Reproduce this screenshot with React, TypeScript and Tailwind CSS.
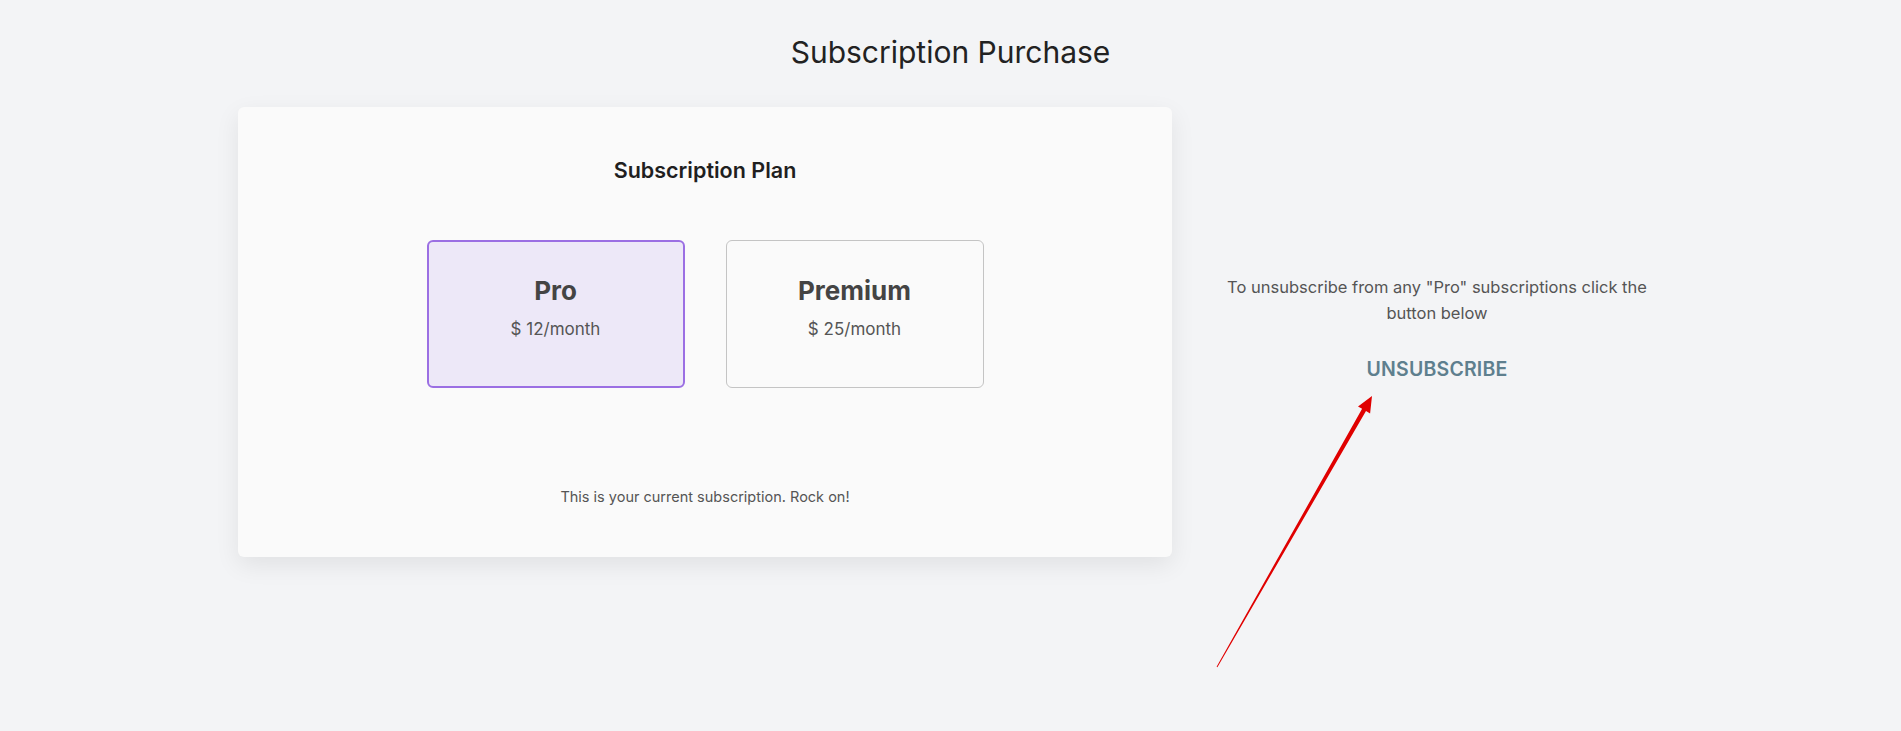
const PLANS = [
  { name: "Pro", price: "$ 12/month", current: true },
  { name: "Premium", price: "$ 25/month", current: false },
];

function PlanOption({ name, price, current }: { name: string; price: string; current: boolean }) {
  return (
    <div
      className={`w-[258px] h-[148px] rounded-md flex flex-col items-center ${
        current ? "border-2 border-[#9b6fe3] bg-[#ede8f8] pt-[32px]" : "border border-[#c4c4c4] bg-[#fafafa] pt-[33px]"
      }`}
    >
      <p className="text-[26px] leading-[34px] font-bold text-[#444]">{name}</p>
      <p className="mt-[9px] text-[17px] leading-[24px] text-[#555]">{price}</p>
    </div>
  );
}

export default function App() {
  return (
    <div className="relative h-[731px] w-full overflow-hidden bg-[#f3f4f6] font-['Inter',sans-serif]">
      <h1 className="pt-[33px] text-center text-[30px] leading-[38px] font-normal text-[#222]">
        Subscription Purchase
      </h1>

      <div className="mt-[36px] flex pl-[238px]">
        <div className="w-[934px] h-[450px] rounded-md bg-[#fafafa] shadow-[0_8px_24px_rgba(0,0,0,0.08)] flex flex-col items-center pt-[48px]">
          <h2 className="text-[21.5px] leading-[30px] font-semibold text-[#1f1f1f]">Subscription Plan</h2>
          <div className="mt-[55px] flex gap-[41px]">
            {PLANS.map((p) => (
              <PlanOption key={p.name} {...p} />
            ))}
          </div>
          <p className="mt-[98px] text-[14.5px] leading-[21px] text-[#555]">
            This is your current subscription. Rock on!
          </p>
        </div>

        <div className="w-[530px] px-[40px] pt-[167px] flex flex-col items-center text-center">
          <p className="text-[16.5px] leading-[26px] text-[#555]">
            To unsubscribe from any "Pro" subscriptions click the button below
          </p>
          <button className="mt-[29px] text-[19.5px] leading-[28px] font-semibold text-[#5e7f8e] tracking-[0.2px]">
            UNSUBSCRIBE
          </button>
        </div>
      </div>

      {/* annotation arrow */}
      <svg
        className="pointer-events-none absolute left-0 top-0"
        width="1901"
        height="731"
        viewBox="0 0 1901 731"
      >
        <polygon
          points="1216.6,666.8 1362.1,408.8 1358,406.4 1372,396 1370.1,413.4 1366,411 1217.4,667.2"
          fill="#e00000"
        />
      </svg>
    </div>
  );
}
